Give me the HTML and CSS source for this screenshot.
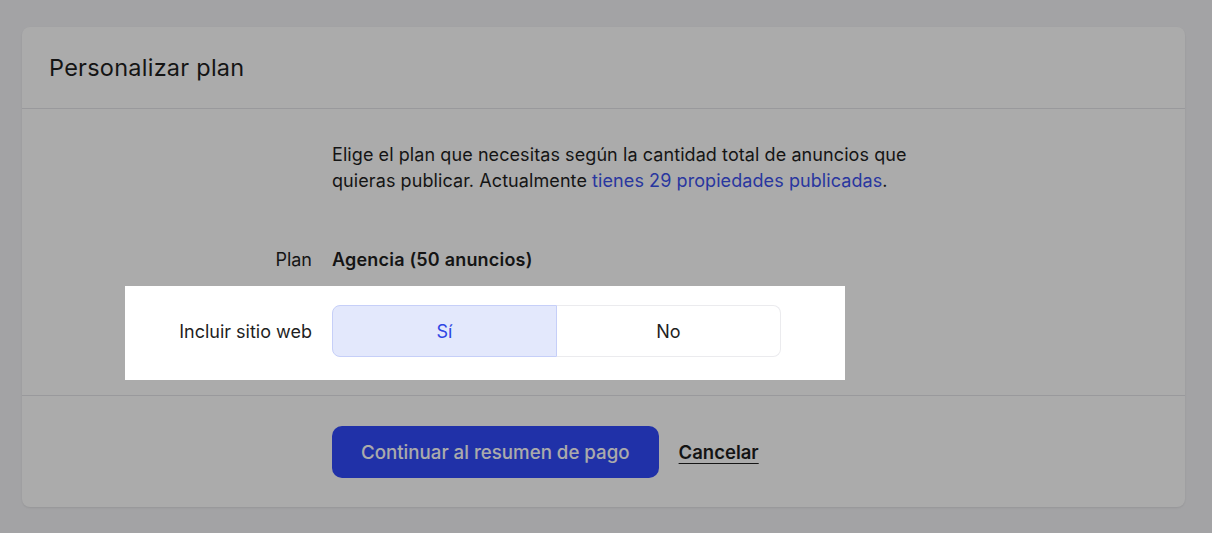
FILE: index.html
```html
<!DOCTYPE html>
<html lang="es">
<head>
<meta charset="utf-8">
<title>Personalizar plan</title>
<link rel="stylesheet" href="styles.css">
</head>
<body>
  <div class="card">
    <div class="cardHead">
      <h1>Personalizar plan</h1>
    </div>

    <div class="cardBody">
      <div class="row">
        <div class="label"></div>
        <p class="desc">Elige el plan que necesitas según la cantidad total de anuncios que quieras publicar. Actualmente <a href="#">tienes 29 propiedades publicadas</a>.</p>
      </div>
      <div class="row rowPlan">
        <div class="label">Plan</div>
        <div class="value"><b>Agencia (50 anuncios)</b></div>
      </div>
      <div class="row rowWeb">
        <div class="label">Incluir sitio web</div>
        <div class="toggle">
          <button class="opt active">Sí</button>
          <button class="opt">No</button>
        </div>
      </div>
    </div>

    <div class="cardFoot">
      <button class="btnMain">Continuar al resumen de pago</button>
      <a href="#" class="btnCancel">Cancelar</a>
    </div>
  </div>

  <div class="spotlight"></div>
</body>
</html>
```

FILE: styles.css
```css
html, body {margin: 0; height: 100%;}
body {font-family: "Inter", "Noto Sans", sans-serif; color: #1f1f1f;
      background-color: #f3f3f6;
      padding: 27px 27px 0 22px; box-sizing: border-box;
      position: relative;
}
.card {background: #fff; border-radius: 8px;
       box-shadow: 0 1px 2px rgba(0,0,0,0.08);
}
.cardHead {height: 81px; border-bottom: 1px solid #e4e4e9;
           display: flex; align-items: center; padding: 0 27px;
}
.cardHead h1 {margin: 0; font-size: 23.5px; font-weight: 400; letter-spacing: 0.25px;}

.cardBody {padding: 33px 0 38px 0; border-bottom: 1px solid #e4e4e9;}
.row {display: grid; grid-template-columns: 290px 1fr; column-gap: 20px; align-items: center;}
.label {text-align: right; font-size: 18px;}
.desc {margin: 0; font-size: 18px; line-height: 26px; max-width: 600px; letter-spacing: 0.08px;}
.desc a {color: #3d52ee; text-decoration: none;}
.rowPlan {margin-top: 53px; font-size: 18px; line-height: 26px;}
.rowPlan b {font-weight: 600; letter-spacing: 0.2px;}
.rowWeb {margin-top: 32px;}

.toggle {display: flex; width: 449px; height: 52px;}
.opt {flex: 1; font: inherit; font-size: 18px; color: #1f1f1f;
      background: #fff; border: 1px solid #ebebee; cursor: pointer;
}
.opt:first-child {border-radius: 8px 0 0 8px;}
.opt:last-child {border-radius: 0 8px 8px 0; border-left: 0;}
.opt.active {background: #e3e8fc; border-color: #c6cff8; color: #2f46e4;}

.cardFoot {padding: 30px 0 29px 310px; display: flex; align-items: center; gap: 20px;}
.btnMain {height: 52px; padding: 0 29px; border: 0; border-radius: 10px;
          background: #3149fb; color: #fff; font: inherit; font-size: 18.7px; font-weight: 500;
          cursor: pointer;
}
.btnCancel {color: #1f1f1f; font-size: 18.5px; font-weight: 600;
            text-underline-offset: 4px;
}

.spotlight {position: absolute; left: 125px; top: 286px; width: 720px; height: 94px;
            box-shadow: 0 0 0 3000px rgba(0,0,0,0.33);
            pointer-events: none;
}
```
